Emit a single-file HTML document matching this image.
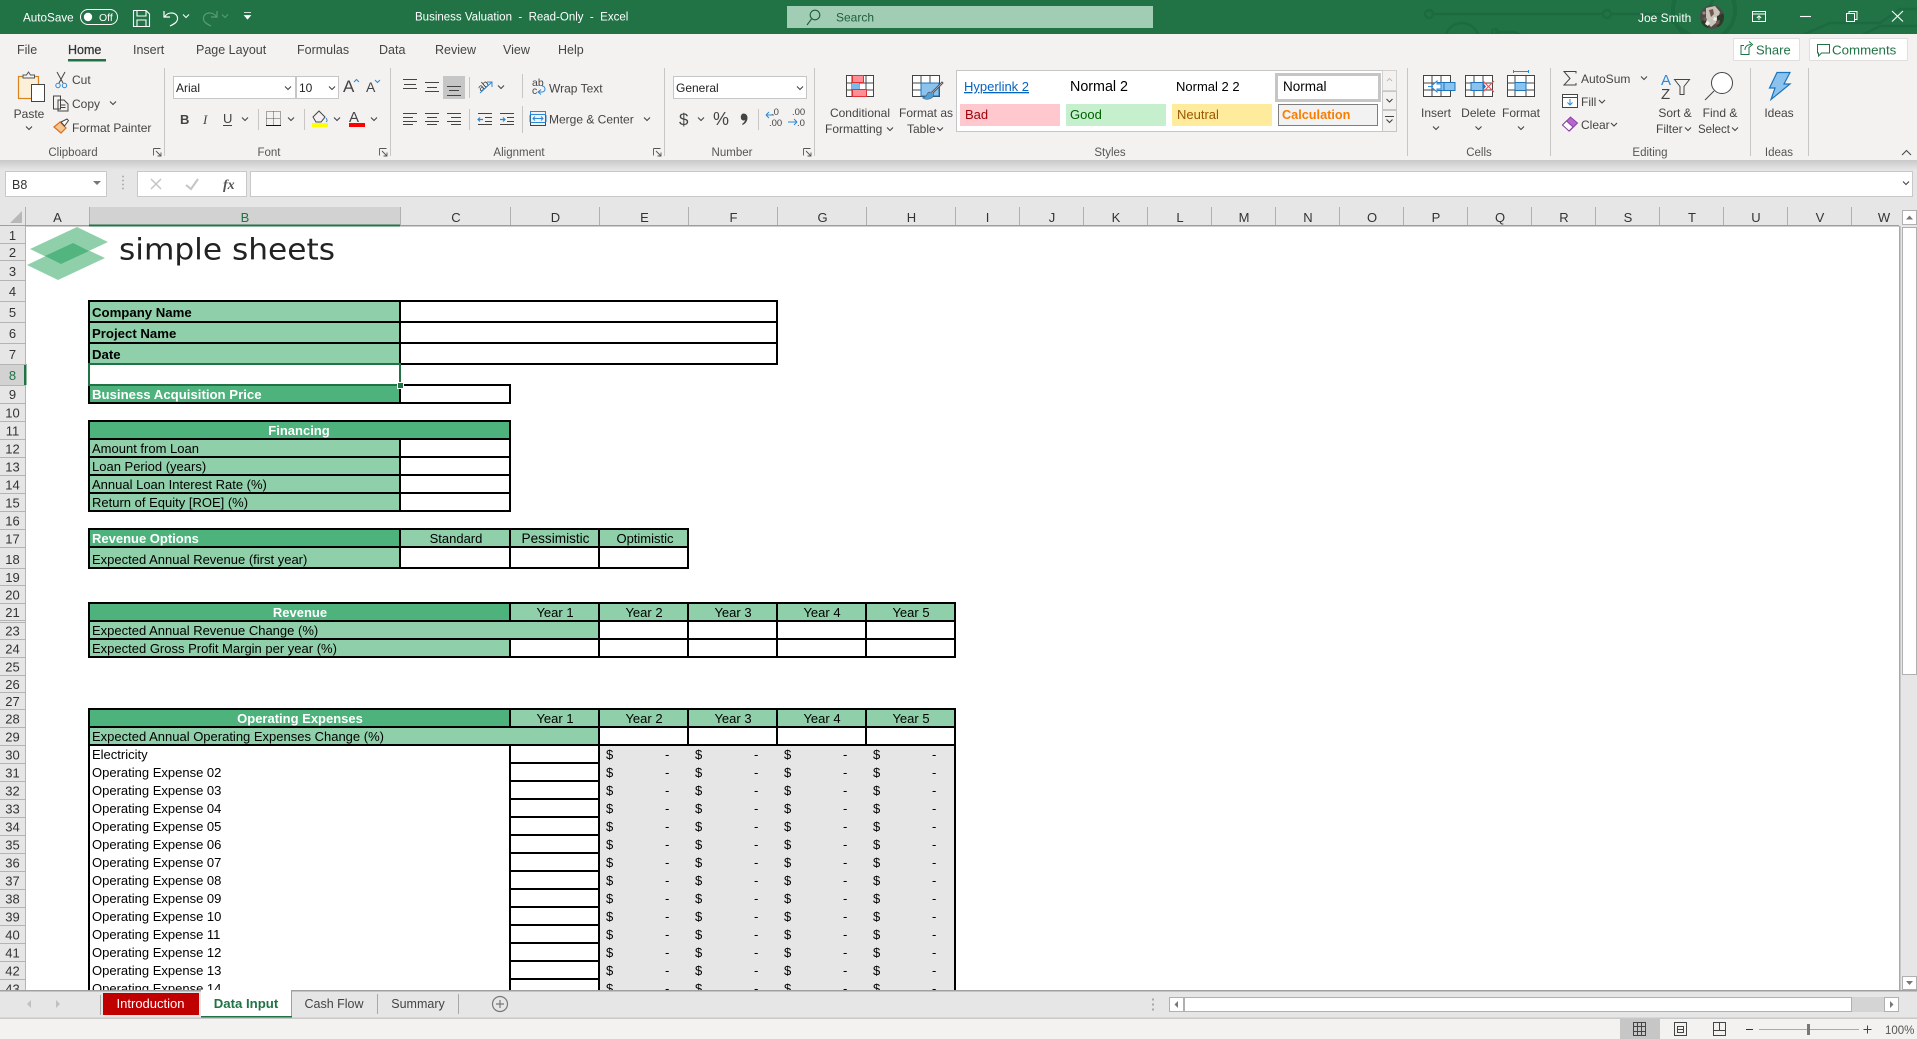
<!DOCTYPE html>
<html lang="en"><head><meta charset="utf-8"><title>Business Valuation - Excel</title>
<style>
html,body{margin:0;padding:0;background:#fff;overflow:hidden;width:1917px;height:1039px}
svg{display:block;position:absolute;left:0;top:0}
text{font-family:"Liberation Sans",Arial,sans-serif;white-space:pre}
.r{font-size:12px;fill:#444}
.t{font-size:12.5px;fill:#444}
.g{font-size:11.5px;fill:#555;text-anchor:middle}
.w{font-size:12px;fill:#fff}
.m{text-anchor:middle}
.c{font-size:13px;fill:#000}
.b{font-weight:bold}
.h{font-size:13px;fill:#333;text-anchor:middle}
.wh{fill:#fff}
.ln{stroke:#000;stroke-width:2;fill:none;shape-rendering:crispEdges}
.ic{fill:none;stroke:#444;stroke-width:1}
.cr{shape-rendering:crispEdges}
</style></head><body>
<svg xmlns="http://www.w3.org/2000/svg" width="1917" height="1039" viewBox="0 0 1917 1039">
<defs>
<path id="ch" d="M-3,-1.5L0,1.5L3,-1.5" fill="none" stroke="#444" stroke-width="1.1"/>
<linearGradient id="sh" x1="0" y1="0" x2="0" y2="1"><stop offset="0" stop-color="#c9c9c9"/><stop offset="1" stop-color="#e6e6e6"/></linearGradient>
<clipPath id="tb"><rect x="1300" y="0" width="617" height="34"/></clipPath>
<clipPath id="av"><circle cx="1712" cy="17" r="12"/></clipPath>
</defs>

<!-- Sheet background -->
<rect width="1917" height="1039" fill="#fff"/>

<!-- Title bar -->
<rect width="1917" height="34" fill="#217346"/>
<g clip-path="url(#tb)" fill="none" stroke="#1c6a3f" stroke-width="2.4">
<path d="M1433,14H1603M1611,14H1660L1690,34"/>
<circle cx="1429" cy="14" r="4"/><circle cx="1607" cy="14" r="4"/>
<circle cx="1704" cy="10" r="31" stroke-width="4"/>
<path d="M1700,-2h14l-8,16M1445,40a17,17 0 0 1 34,0M1495,32l20,0l14,8M1800,36l30,-13h50l20,-14h30M1860,36l20,-10h40"/>
<circle cx="1495" cy="32" r="3"/>
</g>
<text x="23" y="21.5" class="w" style="font-size:11.7px">AutoSave</text>
<rect x="80.5" y="9.5" width="37" height="15" rx="7.5" fill="none" stroke="#fff"/>
<circle cx="88" cy="17" r="4.2" fill="#fff"/>
<text x="99" y="21" class="w" style="font-size:10.5px">Off</text>
<path d="M133.5,10.5H146L149.5,14V26.5H133.5ZM137,10.5V16H146V10.5M137,26.5V20H146V26.5" fill="none" stroke="#fff" stroke-width="1.1"/>
<path d="M164,11V17H170M164.5,17C168,11 177,12 177.5,18C178,22 174,24 170,26" fill="none" stroke="#fff" stroke-width="1.2"/>
<path d="M183,14.5l3,3l3,-3" fill="none" stroke="#fff"/>
<path d="M217,11V17H211M216.5,17C213,11 204,12 203.5,18C203,22 207,24 211,26" fill="none" stroke="#5a9c79" stroke-width="1.2"/>
<path d="M222,14.5l3,3l3,-3" fill="none" stroke="#5a9c79"/>
<path d="M244,12.5h7M244.5,15.5l3,3.5l3,-3.5z" fill="#fff" stroke="#fff" stroke-width=".8"/>
<text x="415" y="20.5" class="w" style="font-size:11.5px">Business Valuation  -  Read-Only  -  Excel</text>
<rect x="787" y="6" width="366" height="22" fill="#a0cdb4"/>
<circle cx="815" cy="15" r="4.8" fill="none" stroke="#1d5c3a" stroke-width="1.1"/><path d="M811.5,19L807,25" stroke="#1d5c3a" stroke-width="1.1"/>
<text x="836" y="21.5" style="font-size:12px;fill:#1f5e3c">Search</text>
<text x="1638" y="22" class="w">Joe Smith</text>
<g clip-path="url(#av)">
<rect x="1700" y="5" width="24" height="24" fill="#4c4b47"/>
<path d="M1706,8l9,-2l5,6l-3,10l-6,5l-5,-6z" fill="#c9c4bb"/>
<path d="M1700,22l6,-3l3,8l-7,3zM1717,16l7,-3v12l-7,2z" fill="#2c3a2a"/>
<path d="M1709,10l4,-1l1,5l-3,3zM1703,18l3,-1l1,3l-3,1zM1716,21l4,-1l-1,4l-3,1z" fill="#6f5a4c"/>
<path d="M1707,20l3,3l-2,3l-3,-2zM1714,17l3,1l-1,3l-3,-1z" fill="#f0ede6"/>
<circle cx="1704" cy="13" r="1.6" fill="#9a8a80"/>
</g>
<path d="M1752.5,11.5H1765.5V21.5H1752.5ZM1752.5,14H1765.5M1759,20V16M1756.8,18L1759,15.8L1761.2,18" fill="none" stroke="#fff"/>
<path d="M1800,16.5H1811" stroke="#fff" stroke-width="1.1"/>
<path d="M1846.5,13.5H1854.5V21.5H1846.5ZM1849,13V11.5H1857V19.5H1855" fill="none" stroke="#fff"/>
<path d="M1892,11L1903,21.5M1903,11L1892,21.5" stroke="#fff" stroke-width="1.1"/>

<!-- Ribbon -->
<rect y="34" width="1917" height="126" fill="#f3f2f1"/>
<text x="17" y="54" class="t">File</text>
<text x="68" y="54" class="t" style="fill:#333;stroke:#333;stroke-width:.25">Home</text>
<rect x="68" y="59" width="38" height="2.5" fill="#217346"/>
<text x="133" y="54" class="t">Insert</text>
<text x="196" y="54" class="t">Page Layout</text>
<text x="297" y="54" class="t">Formulas</text>
<text x="379" y="54" class="t">Data</text>
<text x="435" y="54" class="t">Review</text>
<text x="503" y="54" class="t">View</text>
<text x="558" y="54" class="t">Help</text>

<rect x="1733.5" y="38.5" width="66" height="22" rx="1" fill="#fff" stroke="#e1dfdd"/>
<path d="M1749,47v7.5h-8v-9h3M1745,50c0,-4 3,-5.5 6,-5.5M1749,41.5l3.5,3l-3.5,3" fill="none" stroke="#217346"/>
<text x="1756" y="54.5" style="font-size:13px;fill:#217346">Share</text>
<rect x="1809.5" y="38.5" width="98" height="22" rx="1" fill="#fff" stroke="#e1dfdd"/>
<path d="M1817.5,44.5h12v8.5h-8l-3,3v-3h-1z" fill="none" stroke="#217346"/>
<text x="1832" y="54.5" style="font-size:13.3px;fill:#217346">Comments</text>

<!-- separators -->
<g stroke="#c8c6c4" class="cr"><path d="M164.5,68V156M390.5,68V156M664.5,68V156M814.5,68V156M1407.5,68V156M1550.5,68V156M1750.5,68V156M1808.5,68V156"/>
<path d="M469.5,77V98M469.5,109V130M522.5,74V98M522.5,106V133M258.5,109V130M304.5,109V130M758.5,109V130"/></g>

<!-- Clipboard -->
<rect x="18.5" y="76.5" width="20" height="22" fill="#fdf0d8" stroke="#d98324" stroke-width="1.2"/>
<path d="M23,78v-3h3.5l2,-3l2,3h4v3z" fill="#f3f2f1" stroke="#555"/>
<rect x="31.5" y="84.5" width="13" height="17" fill="#fff" stroke="#444"/>
<text x="29" y="118" class="r m">Paste</text><use href="#ch" x="29" y="128"/>
<path d="M57,72l6,11M65,72l-6,11" stroke="#444" fill="none"/><circle cx="58" cy="85.5" r="2.2" fill="none" stroke="#2b88d8"/><circle cx="64.5" cy="85.5" r="2.2" fill="none" stroke="#2b88d8"/>
<text x="72" y="84" class="r">Cut</text>
<path d="M53.5,96h7l0,13h-7zM58,100h6l4,4v7h-10z" fill="#f3f2f1" stroke="#444"/><path d="M60.5,105h5M60.5,107.5h5" stroke="#444"/>
<text x="72" y="108" class="r">Copy</text><use href="#ch" x="113" y="103"/>
<path d="M54,127l6,-5l6,6l-5,5z" fill="#f7c590" stroke="#d9701d" stroke-width="1.2"/><path d="M61,122l6,-3l1.5,1.5l-4,5.5z" fill="#fff" stroke="#444"/>
<text x="72" y="132" class="r">Format Painter</text>
<text x="73" y="156" class="g">Clipboard</text>
<path d="M153.5,148.5h7M153.5,148.5v7M156,151l5,5M161,152.5v3.5h-3.5" fill="none" stroke="#555" stroke-width=".9"/>

<!-- Font -->
<rect x="173.5" y="76.5" width="122" height="22" fill="#fff" stroke="#c6c6c6"/>
<rect x="296.5" y="76.5" width="42" height="22" fill="#fff" stroke="#c6c6c6"/>
<text x="176" y="92" style="font-size:12px;fill:#222">Arial</text>
<text x="299" y="92" style="font-size:12px;fill:#222">10</text>
<use href="#ch" x="288" y="88"/><use href="#ch" x="332" y="88"/>
<text x="343" y="92" style="font-size:17px;fill:#444">A</text><path d="M354,82l2.5,-2.5l2.5,2.5" fill="none" stroke="#2b88d8"/>
<text x="366" y="92" style="font-size:14px;fill:#444">A</text><path d="M375,80l2.5,2.5l2.5,-2.5" fill="none" stroke="#2b88d8"/>
<text x="180" y="124" style="font-size:13px;font-weight:bold;fill:#444">B</text>
<text x="203" y="124" style="font-size:13px;font-style:italic;fill:#444;font-family:'Liberation Serif',serif">I</text>
<text x="223" y="123" style="font-size:13px;fill:#444">U</text><path d="M223,125.5h9" stroke="#444"/>
<use href="#ch" x="245" y="119"/>
<path d="M266.5,111.5h14v14h-14zM266.5,118.5h14M273.5,111.5v14" fill="none" stroke="#555" stroke-dasharray="1 1"/><path d="M266,125.5h15" stroke="#111"/>
<use href="#ch" x="291" y="119"/>
<path d="M313,117l6,-6l6,6l-4,5h-5z" fill="#f3f2f1" stroke="#444"/><path d="M326,118c1.5,2 1.5,3 0,4" stroke="#2b88d8" fill="none"/>
<rect x="312" y="123" width="16" height="4" fill="#ffff00"/>
<use href="#ch" x="337" y="119"/>
<text x="349" y="122" style="font-size:15px;fill:#444">A</text>
<rect x="349" y="123" width="16" height="4" fill="#f00"/>
<use href="#ch" x="374" y="119"/>
<text x="269" y="156" class="g">Font</text>
<path d="M379.5,148.5h7M379.5,148.5v7M382,151l5,5M387,152.5v3.5h-3.5" fill="none" stroke="#555" stroke-width=".9"/>

<!-- Alignment -->
<rect x="443" y="76" width="22" height="23" fill="#c6c6c6"/>
<g stroke="#444" class="cr"><path d="M403,79.5h14M404,84.5h12M403,88.5h14M425,82.5h14M427,87.5h10M425,91.5h14M447,86.5h14M449,90.5h10M447,95.5h14"/>
<path d="M403,113.5h14M403,117.5h10M403,121.5h14M403,124.5h10M425,113.5h14M427,117.5h10M425,121.5h14M427,124.5h10M447,113.5h14M451,117.5h10M447,121.5h14M451,124.5h10"/>
<path d="M478,113.5h14M485,117.5h7M485,121.5h7M478,124.5h14M500,113.5h14M507,117.5h7M507,121.5h7M500,124.5h14"/></g>
<path d="M483,119.5h-5m2,-2l-2,2l2,2M500,119.5h5m-2,-2l2,2l-2,2" fill="none" stroke="#2b88d8" stroke-width="1.2"/>
<text x="478" y="90" style="font-size:10px;fill:#444" transform="rotate(-40 482 87)">ab</text>
<path d="M480,93l12,-11m-5,0h5v5" fill="none" stroke="#2b88d8"/>
<use href="#ch" x="501" y="87"/>
<text x="532" y="86" style="font-size:10.5px;fill:#444">ab</text><text x="532" y="94" style="font-size:10.5px;fill:#444">c</text>
<path d="M538,92h4c4,0 4,-6 0,-6M541,89.5l-3,2.5l3,2.5" fill="none" stroke="#2b88d8"/>
<text x="549" y="92.5" class="r">Wrap Text</text>
<rect x="530.5" y="111.5" width="15" height="14" fill="#f3f2f1" stroke="#444"/>
<path d="M530.5,111.5h15v3h-15zM530.5,122.5h15" fill="none" stroke="#2b88d8"/>
<path d="M533,118.5h10M535,116.5l-2,2l2,2M541,116.5l2,2l-2,2M530,115v7M546,115v7" fill="none" stroke="#2b88d8"/>
<text x="549" y="123.5" class="r">Merge &amp; Center</text><use href="#ch" x="647" y="119"/>
<text x="519" y="156" class="g">Alignment</text>
<path d="M653.5,148.5h7M653.5,148.5v7M656,151l5,5M661,152.5v3.5h-3.5" fill="none" stroke="#555" stroke-width=".9"/>

<!-- Number -->
<rect x="673.5" y="76.5" width="133" height="22" fill="#fff" stroke="#c6c6c6"/>
<text x="676" y="92" style="font-size:12px;fill:#222">General</text>
<use href="#ch" x="800" y="88"/>
<text x="679" y="125" style="font-size:17px;fill:#444">$</text><use href="#ch" x="701" y="119"/>
<text x="713" y="125" style="font-size:18px;fill:#444">%</text>
<path d="M743.5,113.5c2.6,0 4,1.8 4,4.3c0,3.2 -2,5.9 -4.800,7.2l-.7,-1c1.700,-1.100 2.800,-2.500 3,-4c-.7,.5 -1.300,.6 -1.800,.5c-1.500,-.3 -2.400,-1.500 -2.400,-3.300c0,-2.100 1.200,-3.700 2.700,-3.700z" fill="#444"/>
<text x="771" y="115" style="font-size:9.5px;fill:#444">.0</text><text x="769" y="126" style="font-size:9.5px;fill:#444">.00</text>
<path d="M767,115h8m-8,0l3,-3m-3,3l3,3" fill="none" stroke="#2b88d8" transform="translate(-1,0)"/>
<text x="792" y="115" style="font-size:9.5px;fill:#444">.00</text><text x="797" y="126" style="font-size:9.5px;fill:#444">.0</text>
<path d="M788,122h9m0,0l-3,-3m3,3l-3,3" fill="none" stroke="#2b88d8"/>
<text x="732" y="156" class="g">Number</text>
<path d="M803.5,148.5h7M803.5,148.5v7M806,151l5,5M811,152.5v3.5h-3.5" fill="none" stroke="#555" stroke-width=".9"/>

<!-- Styles -->
<g class="cr">
<rect x="846.5" y="75.5" width="27" height="21" fill="#fff" stroke="#444"/>
<path d="M846,83h28M846,90h28M852,75v22M859,75v22M866,75v22" stroke="#444" fill="none" stroke-width=".8"/>
<rect x="852.5" y="75.5" width="11" height="7" fill="#ff8f94" stroke="#d33"/>
<rect x="852" y="83" width="7" height="7" fill="#7db9ea"/>
<rect x="852.5" y="89.5" width="14" height="7" fill="#ff8f94" stroke="#d33"/>
<rect x="912.5" y="75.5" width="27" height="21" fill="#fff" stroke="#444"/>
<path d="M912,83h28M912,90h28M921,75v22M930,75v22" stroke="#444" fill="none" stroke-width=".8"/>
<rect x="921" y="83" width="18" height="13" fill="#8cc2ee" stroke="#1b75bb" stroke-width=".8"/>
</g>
<path d="M942,82l-11,11c-1,-1 -2,-1 -3,0c-1,2 -2,4 -5,5c3,2 9,1 10,-2c1,-1 0,-2 0,-3l10,-10z" fill="#fff" stroke="#555"/><path d="M923,98c3,2 9,1 10,-2c1,-1 0,-2 -1,-3c-1,-1 -3,0 -4,0c-1,2 -2,4 -5,5z" fill="#4f9fd8"/>
<text x="860" y="117" class="r m">Conditional</text>
<text x="825" y="133" class="r">Formatting</text><use href="#ch" x="890" y="129"/>
<text x="926" y="117" class="r m">Format as</text>
<text x="907" y="133" class="r">Table</text><use href="#ch" x="940" y="129"/>

<rect x="956.5" y="70.5" width="426" height="61" fill="#fff" stroke="#c6c6c6"/>
<text x="964" y="91" style="font-size:13px;fill:#0563c1;text-decoration:underline">Hyperlink 2</text>
<text x="1070" y="91" style="font-size:14.3px;fill:#000">Normal 2</text>
<text x="1176" y="91" style="font-size:13px;fill:#000">Normal 2 2</text>
<rect x="1276.5" y="74.5" width="103" height="26" fill="#fff" stroke="#c6c6c6" stroke-width="3"/>
<text x="1283" y="91" style="font-size:13.5px;fill:#000">Normal</text>
<rect x="960" y="104" width="100" height="22" fill="#ffc7ce"/><text x="965" y="119" style="font-size:13px;fill:#9c0006">Bad</text>
<rect x="1066" y="104" width="100" height="22" fill="#c6efce"/><text x="1070" y="119" style="font-size:13px;fill:#006100">Good</text>
<rect x="1172" y="104" width="100" height="22" fill="#ffeb9c"/><text x="1177" y="119" style="font-size:13px;fill:#9c5700">Neutral</text>
<rect x="1278.5" y="104.5" width="99" height="21" fill="#f2f2f2" stroke="#7f7f7f"/><text x="1282" y="119" style="font-size:12.7px;font-weight:bold;fill:#fa7d00">Calculation</text>
<rect x="1382.5" y="70.5" width="14" height="20" fill="#f3f2f1" stroke="#d2d0ce"/><path d="M1387,81l2.5,-2.5l2.5,2.5" fill="none" stroke="#bbb"/>
<rect x="1382.5" y="91.5" width="14" height="18" fill="#f3f2f1" stroke="#c6c6c6"/><use href="#ch" x="1389.5" y="100.5"/>
<rect x="1382.5" y="110.5" width="14" height="21" fill="#f3f2f1" stroke="#c6c6c6"/><path d="M1385,116.5h9" stroke="#444"/><use href="#ch" x="1389.5" y="121"/>
<text x="1110" y="156" class="g">Styles</text>

<!-- Cells -->
<g class="cr" fill="none" stroke="#444" stroke-width=".9">
<rect x="1423.5" y="75.5" width="27" height="21" fill="#fff"/><path d="M1423,83h28M1423,90h28M1432,75v22M1441,75v22"/>
<rect x="1465.5" y="75.5" width="27" height="21" fill="#fff"/><path d="M1465,83h28M1465,90h28M1474,75v22M1483,75v22"/>
<rect x="1507.5" y="75.5" width="27" height="21" fill="#fff"/><path d="M1507,83h28M1507,90h28M1515,75v22M1526,75v22"/>
</g>
<rect x="1435" y="82.5" width="20" height="8" fill="#8cc2ee" stroke="#1b75bb"/><path d="M1444,82v9" stroke="#1b75bb"/>
<path d="M1437,81l-6,5.5l6,5.5v-3h4v-5h-4z" fill="#fff" stroke="#2b88d8"/><path d="M1428,86.5h5" stroke="#2b88d8"/>
<rect x="1471" y="82.5" width="12" height="8" fill="#8cc2ee" stroke="#1b75bb"/><path d="M1483,83l3,3.5l-3,3.5z" fill="#1b75bb"/>
<path d="M1483,81l11,11M1494,81l-11,11" stroke="#e8545a" stroke-width="1.1"/>
<rect x="1515" y="82.5" width="11" height="8" fill="#8cc2ee" stroke="#1b75bb"/>
<path d="M1513.5,71.5h15M1513.5,70v3M1528.5,70v3" stroke="#2b88d8"/>
<text x="1436" y="117" class="r m">Insert</text><use href="#ch" x="1436" y="128"/>
<text x="1478.5" y="117" class="r m">Delete</text><use href="#ch" x="1478.5" y="128"/>
<text x="1521" y="117" class="r m">Format</text><use href="#ch" x="1521" y="128"/>
<text x="1479" y="156" class="g">Cells</text>

<!-- Editing -->
<path d="M1576,73.5v-2h-12l6,7l-6,6.5h12v-2" fill="none" stroke="#444"/>
<text x="1581" y="83" class="r">AutoSum</text><use href="#ch" x="1644" y="78"/>
<rect x="1562.5" y="94.5" width="15" height="13" fill="#fff" stroke="#444"/><path d="M1562.5,97.5h15" stroke="#444"/><path d="M1570,99v6m-2.5,-2.5l2.5,2.5l2.5,-2.5" fill="none" stroke="#2b88d8"/>
<text x="1581" y="106" class="r">Fill</text><use href="#ch" x="1602" y="101.5"/>
<path d="M1562.5,125l8,-8l7,6l-8,8z" fill="#b666c8" stroke="#8c3fa6"/><path d="M1562.5,125l4,-4l6.5,6l-4,4z" fill="#fff" stroke="#8c3fa6"/>
<text x="1581" y="129" class="r">Clear</text><use href="#ch" x="1614" y="124.5"/>
<text x="1661" y="85" style="font-size:15px;fill:#2b88d8">A</text><text x="1661" y="99" style="font-size:15px;fill:#444">Z</text>
<path d="M1674.5,79.5h15l-5.5,7v8h-4v-8z" fill="#f3f2f1" stroke="#444"/>
<text x="1675" y="117" class="r m">Sort &amp;</text>
<text x="1656" y="133" class="r">Filter</text><use href="#ch" x="1688" y="129"/>
<circle cx="1722" cy="83" r="10.5" fill="#fff" stroke="#444"/><path d="M1714,91l-9,9" stroke="#444"/>
<text x="1720" y="117" class="r m">Find &amp;</text>
<text x="1698" y="133" class="r" style="font-size:11.5px">Select</text><use href="#ch" x="1735" y="129"/>
<text x="1650" y="156" class="g">Editing</text>
<path d="M1777,72.5H1790L1784,84H1790L1771,99.500L1775,88H1769.500Z" fill="#8cc2ee" stroke="#1b75bb" stroke-width="1.2"/>
<text x="1779" y="117" class="r m">Ideas</text>
<text x="1779" y="156" class="g">Ideas</text>
<path d="M1902,155l4.5,-4.5l4.5,4.5" fill="none" stroke="#444"/>

<!-- Formula bar -->
<rect y="160" width="1917" height="47" fill="#e6e6e6"/>
<rect y="160" width="1917" height="10" fill="url(#sh)"/>
<rect x="5.5" y="171.5" width="101" height="25" fill="#fff" stroke="#c8c8c8"/>
<text x="12" y="189" style="font-size:12.5px;fill:#333">B8</text>
<path d="M93,181h8l-4,4z" fill="#777"/>
<path d="M122,176.5h2M122,180.5h2M122,184.5h2M122,188.5h2" stroke="#b0b0b0" stroke-width="1.5"/>
<rect x="137.5" y="171.5" width="109" height="25" fill="#fff" stroke="#c8c8c8"/>
<path d="M151,179l10,10M161,179l-10,10" stroke="#c4c4c4" stroke-width="1.5"/>
<path d="M186,185l5,4l7,-10" fill="none" stroke="#c4c4c4" stroke-width="2"/>
<text x="223" y="189" style="font-size:14px;font-style:italic;font-weight:bold;font-family:'Liberation Serif',serif;fill:#555">fx</text>
<rect x="250.5" y="171.5" width="1662" height="25" fill="#fff" stroke="#c8c8c8"/>
<use href="#ch" x="1906" y="183"/>

<!-- Column headers -->
<rect y="207" width="1900" height="19" fill="#e6e6e6"/>
<rect x="89" y="207" width="311" height="19" fill="#d2d2d2"/>
<path d="M10,223L22,211V223Z" fill="#b8b8b8"/>
<path d="M25.5,207V226M89.5,207V226M400.5,207V226M510.5,207V226M599.5,207V226M688.5,207V226M777.5,207V226M866.5,207V226M955.5,207V226M1019.5,207V226M1083.5,207V226M1147.5,207V226M1211.5,207V226M1275.5,207V226M1339.5,207V226M1403.5,207V226M1467.5,207V226M1531.5,207V226M1595.5,207V226M1659.5,207V226M1723.5,207V226M1787.5,207V226M1851.5,207V226" stroke="#b0b0b0" class="cr"/>
<rect y="225" width="1900" height="1.5" fill="#9e9e9e"/>
<rect x="89" y="224.500" width="311" height="2" fill="#217346"/>
<g class="h">
<text x="57.5" y="222">A</text><text x="245" y="222" style="fill:#217346">B</text><text x="456" y="222">C</text><text x="555.5" y="222">D</text><text x="644.5" y="222">E</text><text x="733.5" y="222">F</text><text x="822.5" y="222">G</text><text x="911.5" y="222">H</text><text x="987.5" y="222">I</text><text x="1052" y="222">J</text><text x="1116" y="222">K</text><text x="1180" y="222">L</text><text x="1244" y="222">M</text><text x="1308" y="222">N</text><text x="1372" y="222">O</text><text x="1436" y="222">P</text><text x="1500" y="222">Q</text><text x="1564" y="222">R</text><text x="1628" y="222">S</text><text x="1692" y="222">T</text><text x="1756" y="222">U</text><text x="1820" y="222">V</text><text x="1884" y="222">W</text>
</g>

<!-- Logo -->
<path d="M77,227L108,242L61,264L30,249Z" fill="#8fd0ab"/>
<path d="M73,243L105,258L58,280L27,265Z" fill="#8fd0ab"/>
<path d="M73,243L89,251L61,264L45,256Z" fill="#52b47f"/>
<text x="119" y="259.5" textLength="216" lengthAdjust="spacingAndGlyphs" style="font-size:29.5px;fill:#222;font-family:'DejaVu Sans',sans-serif">simple sheets</text>

<!-- Fills -->
<g class="cr">
<rect x="89" y="301" width="311" height="63" fill="#8fcfa9"/>
<rect x="89" y="385" width="311" height="18" fill="#4db27b"/>
<rect x="89" y="421" width="421" height="18" fill="#4db27b"/>
<rect x="89" y="439" width="311" height="72" fill="#8fcfa9"/>
<rect x="89" y="529" width="311" height="18" fill="#4db27b"/>
<rect x="400" y="529" width="288" height="18" fill="#8fcfa9"/>
<rect x="89" y="547" width="311" height="21" fill="#8fcfa9"/>
<rect x="89" y="603" width="421" height="18" fill="#4db27b"/>
<rect x="510" y="603" width="445" height="18" fill="#8fcfa9"/>
<rect x="89" y="621" width="510" height="18" fill="#8fcfa9"/>
<rect x="89" y="639" width="421" height="18" fill="#8fcfa9"/>
<rect x="89" y="709" width="421" height="18" fill="#4db27b"/>
<rect x="510" y="709" width="445" height="18" fill="#8fcfa9"/>
<rect x="89" y="727" width="510" height="18" fill="#8fcfa9"/>
<rect x="599" y="745" width="356" height="245" fill="#e6e6e6"/>
</g>

<!-- Borders -->
<path class="ln" d="M88,301H778M88,322H778M88,343H778M400,364H778M89,300V365M400,300V365M777,300V365
M400,385H511M88,403H511M89,385V404M400,385V404M510,384V404
M88,421H511M88,439H511M88,457H511M88,475H511M88,493H511M88,511H511M89,420V512M510,420V512M400,439V512
M88,529H689M88,547H689M88,568H689M89,528V569M400,528V569M510,528V569M599,528V569M688,528V569
M88,603H956M88,621H956M88,639H956M88,657H956M89,602V658M510,603V621M510,639V657M599,603V658M688,603V658M777,603V658M866,603V658M955,602V658
M88,709H956M88,727H956M88,745H956M89,708V990M510,709V727M510,745V990M599,709V990M688,709V745M777,709V745M866,709V745M955,708V990
M510,763H599M510,781H599M510,799H599M510,817H599M510,835H599M510,853H599M510,871H599M510,889H599M510,907H599M510,925H599M510,943H599M510,961H599M510,979H599"/>

<!-- Selected cell -->
<rect x="89" y="364" width="311" height="21" fill="#fff" stroke="#217346" stroke-width="2" class="cr"/>
<rect x="397.5" y="382.5" width="6" height="6" fill="#217346" stroke="#fff" stroke-width=".8" class="cr"/>

<!-- Sheet text -->
<g class="c">
<text x="92" y="317" class="b" style="font-size:13.2px">Company Name</text>
<text x="92" y="338" class="b" style="font-size:13.2px">Project Name</text>
<text x="92" y="359" class="b" style="font-size:13.2px">Date</text>
<text x="92" y="399" class="b wh" style="font-size:13.2px">Business Acquisition Price</text>
<text x="299" y="435" class="b wh m">Financing</text>
<text x="92" y="453">Amount from Loan</text>
<text x="92" y="471">Loan Period (years)</text>
<text x="92" y="489">Annual Loan Interest Rate (%)</text>
<text x="92" y="507">Return of Equity [ROE] (%)</text>
<text x="92" y="543" class="b wh">Revenue Options</text>
<text x="456" y="543" class="m">Standard</text><text x="555.5" y="543" class="m" style="font-size:13.6px">Pessimistic</text><text x="645" y="543" class="m">Optimistic</text>
<text x="92" y="564">Expected Annual Revenue (first year)</text>
<text x="300" y="617" class="b wh m">Revenue</text>
<text x="555" y="617" class="m">Year 1</text><text x="644" y="617" class="m">Year 2</text><text x="733" y="617" class="m">Year 3</text><text x="822" y="617" class="m">Year 4</text><text x="911" y="617" class="m">Year 5</text>
<text x="92" y="635">Expected Annual Revenue Change (%)</text>
<text x="92" y="653">Expected Gross Profit Margin per year (%)</text>
<text x="300" y="723" class="b wh m">Operating Expenses</text>
<text x="555" y="723" class="m">Year 1</text><text x="644" y="723" class="m">Year 2</text><text x="733" y="723" class="m">Year 3</text><text x="822" y="723" class="m">Year 4</text><text x="911" y="723" class="m">Year 5</text>
<text x="92" y="741">Expected Annual Operating Expenses Change (%)</text>
<text x="92" y="759">Electricity</text>
<text x="92" y="777">Operating Expense 02</text>
<text x="92" y="795">Operating Expense 03</text>
<text x="92" y="813">Operating Expense 04</text>
<text x="92" y="831">Operating Expense 05</text>
<text x="92" y="849">Operating Expense 06</text>
<text x="92" y="867">Operating Expense 07</text>
<text x="92" y="885">Operating Expense 08</text>
<text x="92" y="903">Operating Expense 09</text>
<text x="92" y="921">Operating Expense 10</text>
<text x="92" y="939">Operating Expense 11</text>
<text x="92" y="957">Operating Expense 12</text>
<text x="92" y="975">Operating Expense 13</text>
<text x="92" y="993">Operating Expense 14</text>
<text y="759"><tspan x="606">$</tspan><tspan x="665">-</tspan><tspan x="695">$</tspan><tspan x="754">-</tspan><tspan x="784">$</tspan><tspan x="843">-</tspan><tspan x="873">$</tspan><tspan x="932">-</tspan></text>
<text y="777"><tspan x="606">$</tspan><tspan x="665">-</tspan><tspan x="695">$</tspan><tspan x="754">-</tspan><tspan x="784">$</tspan><tspan x="843">-</tspan><tspan x="873">$</tspan><tspan x="932">-</tspan></text>
<text y="795"><tspan x="606">$</tspan><tspan x="665">-</tspan><tspan x="695">$</tspan><tspan x="754">-</tspan><tspan x="784">$</tspan><tspan x="843">-</tspan><tspan x="873">$</tspan><tspan x="932">-</tspan></text>
<text y="813"><tspan x="606">$</tspan><tspan x="665">-</tspan><tspan x="695">$</tspan><tspan x="754">-</tspan><tspan x="784">$</tspan><tspan x="843">-</tspan><tspan x="873">$</tspan><tspan x="932">-</tspan></text>
<text y="831"><tspan x="606">$</tspan><tspan x="665">-</tspan><tspan x="695">$</tspan><tspan x="754">-</tspan><tspan x="784">$</tspan><tspan x="843">-</tspan><tspan x="873">$</tspan><tspan x="932">-</tspan></text>
<text y="849"><tspan x="606">$</tspan><tspan x="665">-</tspan><tspan x="695">$</tspan><tspan x="754">-</tspan><tspan x="784">$</tspan><tspan x="843">-</tspan><tspan x="873">$</tspan><tspan x="932">-</tspan></text>
<text y="867"><tspan x="606">$</tspan><tspan x="665">-</tspan><tspan x="695">$</tspan><tspan x="754">-</tspan><tspan x="784">$</tspan><tspan x="843">-</tspan><tspan x="873">$</tspan><tspan x="932">-</tspan></text>
<text y="885"><tspan x="606">$</tspan><tspan x="665">-</tspan><tspan x="695">$</tspan><tspan x="754">-</tspan><tspan x="784">$</tspan><tspan x="843">-</tspan><tspan x="873">$</tspan><tspan x="932">-</tspan></text>
<text y="903"><tspan x="606">$</tspan><tspan x="665">-</tspan><tspan x="695">$</tspan><tspan x="754">-</tspan><tspan x="784">$</tspan><tspan x="843">-</tspan><tspan x="873">$</tspan><tspan x="932">-</tspan></text>
<text y="921"><tspan x="606">$</tspan><tspan x="665">-</tspan><tspan x="695">$</tspan><tspan x="754">-</tspan><tspan x="784">$</tspan><tspan x="843">-</tspan><tspan x="873">$</tspan><tspan x="932">-</tspan></text>
<text y="939"><tspan x="606">$</tspan><tspan x="665">-</tspan><tspan x="695">$</tspan><tspan x="754">-</tspan><tspan x="784">$</tspan><tspan x="843">-</tspan><tspan x="873">$</tspan><tspan x="932">-</tspan></text>
<text y="957"><tspan x="606">$</tspan><tspan x="665">-</tspan><tspan x="695">$</tspan><tspan x="754">-</tspan><tspan x="784">$</tspan><tspan x="843">-</tspan><tspan x="873">$</tspan><tspan x="932">-</tspan></text>
<text y="975"><tspan x="606">$</tspan><tspan x="665">-</tspan><tspan x="695">$</tspan><tspan x="754">-</tspan><tspan x="784">$</tspan><tspan x="843">-</tspan><tspan x="873">$</tspan><tspan x="932">-</tspan></text>
<text y="993"><tspan x="606">$</tspan><tspan x="665">-</tspan><tspan x="695">$</tspan><tspan x="754">-</tspan><tspan x="784">$</tspan><tspan x="843">-</tspan><tspan x="873">$</tspan><tspan x="932">-</tspan></text>
</g>

<!-- Row headers -->
<rect y="226" width="26" height="764" fill="#e6e6e6"/>
<rect y="364" width="26" height="21" fill="#d2d2d2"/>
<rect x="25" y="226" width="1" height="764" fill="#b4b4b4"/>
<rect x="24" y="364" width="2.5" height="21" fill="#217346"/>
<path class="cr" stroke="#b4b4b4" d="M0,243.5h26M0,260.5h26M0,280.5h26M0,301.5h26M0,322.5h26M0,343.5h26M0,364.5h26M0,385.5h26M0,403.5h26M0,421.5h26M0,439.5h26M0,457.5h26M0,475.5h26M0,493.5h26M0,511.5h26M0,529.5h26M0,547.5h26M0,568.5h26M0,585.5h26M0,603.5h26M0,620.5h26M0,622.5h26M0,639.5h26M0,657.5h26M0,675.5h26M0,692.5h26M0,709.5h26M0,727.5h26M0,745.5h26M0,763.5h26M0,781.5h26M0,799.5h26M0,817.5h26M0,835.5h26M0,853.5h26M0,871.5h26M0,889.5h26M0,907.5h26M0,925.5h26M0,943.5h26M0,961.5h26M0,979.5h26"/>
<g class="h">
<text x="12.5" y="240">1</text><text x="12.5" y="257">2</text><text x="12.5" y="276">3</text><text x="12.5" y="296">4</text><text x="12.5" y="317">5</text><text x="12.5" y="338">6</text><text x="12.5" y="359">7</text><text x="12.5" y="380" style="fill:#217346">8</text><text x="12.5" y="399">9</text><text x="12.5" y="417.5">10</text><text x="12.5" y="435.5">11</text><text x="12.5" y="453.5">12</text><text x="12.5" y="471.5">13</text><text x="12.5" y="489.5">14</text><text x="12.5" y="507.5">15</text><text x="12.5" y="525.5">16</text><text x="12.5" y="543.5">17</text><text x="12.5" y="564">18</text><text x="12.5" y="582">19</text><text x="12.5" y="599.5">20</text><text x="12.5" y="617">21</text><text x="12.5" y="635.5">23</text><text x="12.5" y="653.5">24</text><text x="12.5" y="671.5">25</text><text x="12.5" y="689">26</text><text x="12.5" y="706">27</text><text x="12.5" y="723.5">28</text><text x="12.5" y="741.5">29</text><text x="12.5" y="759.5">30</text><text x="12.5" y="777.5">31</text><text x="12.5" y="795.5">32</text><text x="12.5" y="813.5">33</text><text x="12.5" y="831.5">34</text><text x="12.5" y="849.5">35</text><text x="12.5" y="867.5">36</text><text x="12.5" y="885.5">37</text><text x="12.5" y="903.5">38</text><text x="12.5" y="921.5">39</text><text x="12.5" y="939.5">40</text><text x="12.5" y="957.5">41</text><text x="12.5" y="975.5">42</text><text x="12.5" y="993.5">43</text>
</g>

<!-- Vertical scrollbar -->
<rect x="1899" y="207" width="18" height="783" fill="#e6e6e6"/>
<rect x="1899" y="226" width="1.5" height="764" fill="#a8a8a8"/>
<rect x="1902.5" y="210.5" width="14" height="14" fill="#fff" stroke="#b0b0b0"/><path d="M1906,219.5h7l-3.5,-4z" fill="#777"/>
<rect x="1902.5" y="227.5" width="14" height="447" fill="#fff" stroke="#b0b0b0"/>
<rect x="1902.5" y="976.5" width="14" height="13" fill="#fff" stroke="#b0b0b0"/><path d="M1906,981h7l-3.5,4z" fill="#777"/>

<!-- Tab bar -->
<rect y="990" width="1917" height="28" fill="#e6e6e6"/>
<rect y="990" width="1917" height="1.5" fill="#a0a0a0"/>
<path d="M31,1000v8l-4,-4zM56,1000v8l4,-4z" fill="#c0c0c0"/>
<path class="cr" d="M100.5,995V1015M377.5,994V1014M458.5,994V1014" stroke="#a8a8a8"/>
<rect x="103" y="993" width="96" height="22" fill="#c00000"/>
<text x="150.5" y="1008" class="m" style="font-size:13px;fill:#fff">Introduction</text>
<rect x="201" y="990" width="91" height="28" fill="#fff"/>
<rect x="201" y="1016" width="91" height="2" fill="#217346"/>
<path d="M291.5,990V1016" stroke="#a0a0a0"/>
<text x="246" y="1008" class="m b" style="font-size:13.2px;fill:#217346">Data Input</text>
<text x="334" y="1008" class="m" style="font-size:12.5px;fill:#444">Cash Flow</text>
<text x="418" y="1008" class="m" style="font-size:12.5px;fill:#444">Summary</text>
<circle cx="500" cy="1004" r="7.5" fill="none" stroke="#777" stroke-width="1.2"/><path d="M500,1000v8M496,1004h8" stroke="#777" stroke-width="1.2"/>
<path d="M1153,998.5v2M1153,1003.5v2M1153,1008.5v2" stroke="#a8a8a8" stroke-width="2"/>
<rect x="1169.5" y="997.5" width="728" height="14" fill="#d4d4d4" stroke="#d4d4d4"/>
<rect x="1169.5" y="997.5" width="14" height="14" fill="#fff" stroke="#b0b0b0"/><path d="M1178,1001v7l-3.5,-3.5z" fill="#777"/>
<rect x="1184.5" y="997.5" width="667" height="14" fill="#fff" stroke="#b0b0b0"/>
<rect x="1884.5" y="997.5" width="14" height="14" fill="#fff" stroke="#b0b0b0"/><path d="M1890,1001v7l3.5,-3.5z" fill="#777"/>

<!-- Status bar -->
<rect y="1018" width="1917" height="21" fill="#f3f2f1"/>
<rect y="1017.5" width="1917" height="1.5" fill="#c8c8c8"/>
<rect x="1620" y="1019" width="40" height="20" fill="#c6c6c6"/>
<path class="cr" d="M1633.5,1022.5h12v13h-12zM1633.5,1026.5h12M1633.5,1031.5h12M1637.5,1022.5v13M1641.5,1022.5v13" fill="none" stroke="#444"/>
<path class="cr" d="M1674.5,1022.5h12v13h-12zM1677.5,1026.5h6v6h-6zM1677.5,1029.5h6" fill="none" stroke="#444"/>
<path class="cr" d="M1713.5,1022.5h12v13h-12zM1713.5,1030.5h6v-8M1719.5,1030.5h6" fill="none" stroke="#444"/>
<path d="M1759,1029.5h100" stroke="#aaa" class="cr"/>
<path d="M1746,1029.5h7" stroke="#333"/>
<rect x="1807" y="1024" width="3" height="11" fill="#777"/>
<path d="M1867.5,1025.5v8M1863.5,1029.5h8" stroke="#444"/>
<text x="1885" y="1034" style="font-size:11.5px;fill:#555">100%</text>
</svg>
</body></html>
